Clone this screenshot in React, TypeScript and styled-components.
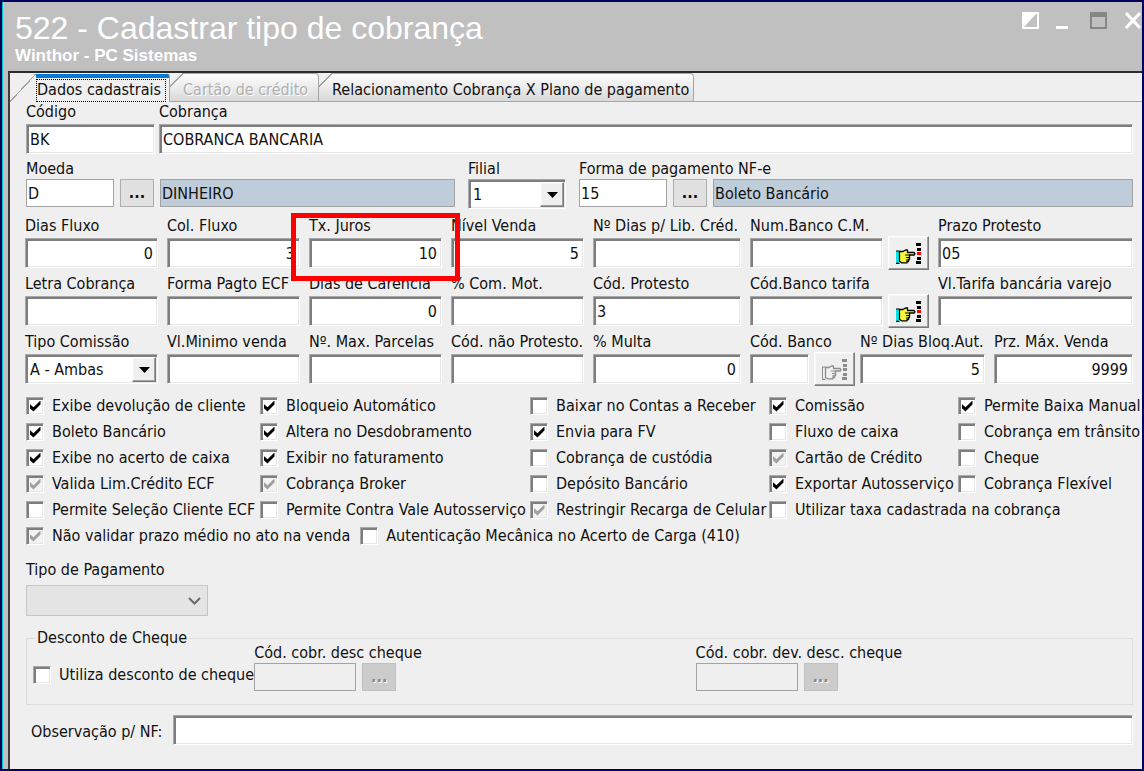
import React, { useId, useState } from "react";
import styled, { createGlobalStyle, css } from "styled-components";

const GlobalStyle = createGlobalStyle`
  *, *::before, *::after { box-sizing: border-box; }
  body {
    margin: 0;
    background: #00005c;
    color: #111;
    font: 16px/20px "DejaVu Sans Condensed", "DejaVu Sans", sans-serif;
  }
  button, input, select { font: inherit; color: inherit; margin: 0; border-radius: 0; }
`;

const sunken = css`
  border: 1px solid;
  border-color: #a8a8a8 #fff #fff #a8a8a8;
  box-shadow: inset 2px 2px 0 #7e7e7e, inset -1px -1px 0 #e6e6e6;
`;

const raised = css`
  border: 1px solid;
  border-color: #fff #7a7a7a #7a7a7a #fff;
  box-shadow: inset -1px -1px 0 #a0a0a0, inset 1px 1px 0 #f6f6f6;
  background: #efefef;
`;

/* ---------- window frame ---------- */

const Desktop = styled.div`
  min-height: 100vh;
  padding: 2px;
  display: flex;
  background: #00005c;
`;

const Window = styled.main`
  flex: 1;
  min-width: 0;
  display: flex;
  flex-direction: column;
  background: #c0c0c0;
  border-left: 1px solid #00c4cc;
`;

const TitleBar = styled.header`
  display: flex;
  justify-content: space-between;
  height: 69px;
  padding: 8px 0 0 12px;
  color: #fff;
  font-family: "Liberation Sans", Arial, sans-serif;
`;

const Title = styled.h1`
  margin: 0;
  font-size: 32px;
  line-height: 36px;
  font-weight: 400;
`;

const Subtitle = styled.p`
  margin: 0;
  font-size: 17px;
  line-height: 20px;
  font-weight: 700;
`;

const WindowButtons = styled.div`
  display: flex;
  gap: 17px;
  padding: 2px 1px 0 0;
  align-items: flex-start;
`;

const WindowButton = styled.button`
  width: 17px;
  height: 17px;
  padding: 0;
  border: 0;
  background: none;
  svg { display: block; }
`;

const Panel = styled.section`
  flex: 1;
  margin-left: 5px;
  border-left: 2px solid #3c3c3c;
  border-top: 2px solid #2c2c2c;
  background: #efefef;
`;

/* ---------- tabs ---------- */

const TabRow = styled.div`
  display: flex;
  height: 29px;
`;

const Tab = styled.button<{ $width: number }>`
  position: relative;
  flex: 0 0 auto;
  width: ${(p) => p.$width}px;
  padding: 4px 0 0 13px;
  border: 1px solid #a6a6a6;
  border-left: 0;
  border-top-right-radius: 4px;
  background: linear-gradient(#fdfdfd, #d9d9d9);
  text-align: left;
  white-space: nowrap;

  &::before {
    content: "";
    position: absolute;
    left: 0;
    top: -1px;
    width: 14px;
    height: 14px;
    background: linear-gradient(to bottom right, #efefef 46%, #a0a0a0 46% 53%, transparent 53%);
  }

  &:disabled {
    color: #b0b0b0;
    text-shadow: 1px 1px 0 #fff;
  }

  &[aria-selected="true"] {
    padding: 5px 3px 0 26px;
    border: 0;
    border-right: 1px solid #a6a6a6;
    background: linear-gradient(#0078d7, #0078d7) right 0 top 1px / calc(100% - 26px) 4px no-repeat;
  }
  &[aria-selected="true"]::before {
    top: 1px;
    width: 26px;
    height: 28px;
    background: linear-gradient(to bottom right, transparent 48%, #a0a0a0 48% 51%, transparent 51%);
  }
`;

const FocusText = styled.span`
  display: block;
  height: 23px;
  border: 1px dotted #000;
`;

const TabFill = styled.div`
  flex: 1;
  border-bottom: 1px solid #a6a6a6;
`;

/* ---------- form parts ---------- */

const Form = styled.form`
  padding: 0 9px 23px 16px;
`;

const FieldBlock = styled.div`
  margin: 7px 0 0 -1px;
  display: flex;
  flex-direction: column;
  gap: 6px;
`;

const Row = styled.div<{ $columns: number[]; $gap?: number; $top?: number }>`
  display: grid;
  grid-template-columns: ${(p) => p.$columns.map((c) => `minmax(0, ${c}fr)`).join(" ")};
  column-gap: ${(p) => p.$gap ?? 9}px;
  margin-top: ${(p) => p.$top ?? 0}px;
`;

const Field = styled.div<{ $tight?: boolean }>`
  position: relative;
  min-width: 0;
  display: flex;
  flex-direction: column;
  gap: ${(p) => (p.$tight ? 0 : 2)}px;
`;

const Label = styled.label`
  height: 20px;
  white-space: nowrap;
`;

const Controls = styled.div<{ $gap?: number }>`
  display: flex;
  align-items: center;
  gap: ${(p) => p.$gap ?? 6}px;
`;

const TextInput = styled.input<{ $numeric?: boolean }>`
  ${sunken}
  flex: 1 1 auto;
  width: 100%;
  min-width: 0;
  height: 30px;
  padding: 0 4px 0 3px;
  background: #fff;
  text-align: ${(p) => (p.$numeric ? "right" : "left")};
  outline: 0;
`;

const FlatInput = styled.input<{ $width?: number }>`
  flex: ${(p) => (p.$width ? `0 0 ${p.$width}px` : "1 1 0")};
  width: ${(p) => (p.$width ? `${p.$width}px` : "auto")};
  min-width: 0;
  height: 28px;
  padding: 0 2px 0 1px;
  border: 1px solid #a3a3a3;
  background: #fff;
  outline: 0;
  &:read-only { background: #bfccd9; }
  &:disabled { background: #efefef; }
`;

const DotsButton = styled.button`
  flex: 0 0 34px;
  height: 28px;
  padding: 0;
  border: 1px solid #adadad;
  background: #e1e1e1;
  font-weight: 700;
  &:disabled {
    border-color: #c0c0c0;
    background: #cccccc;
    color: #8a8a8a;
    text-shadow: 1px 1px 0 #fff;
  }
`;

const HandButton = styled.button`
  ${raised}
  flex: 0 0 41px;
  height: 34px;
  margin: -2px 0;
  padding: 0;
  display: flex;
  align-items: center;
  justify-content: center;
`;

const SelectBox = styled.div`
  position: relative;
  height: 30px;
`;

const ClassicSelect = styled.select`
  ${sunken}
  appearance: none;
  width: 100%;
  height: 30px;
  padding: 2px 28px 0 4px;
  background: #fff;
  outline: 0;
`;

const ArrowBox = styled.span`
  ${raised}
  position: absolute;
  right: 2px;
  top: 3px;
  width: 24px;
  height: 25px;
  display: grid;
  place-items: center;
  pointer-events: none;
`;

const DisabledSelect = styled.select`
  appearance: none;
  width: 182px;
  height: 31px;
  border: 1px solid #b4b4b4;
  background: #e0e0e0;
`;

const ChevronBox = styled.span`
  position: absolute;
  left: 162px;
  top: 12px;
  line-height: 0;
  pointer-events: none;
`;

const Highlight = styled.span`
  position: absolute;
  z-index: 2;
  top: -3px;
  bottom: -13px;
  left: -18px;
  right: -18px;
  border: 5px solid #fe0000;
  pointer-events: none;
`;

/* ---------- check boxes ---------- */

const CheckGrid = styled.div`
  display: grid;
  grid-template-columns: 234fr 270fr 239fr 189fr 175fr;
  grid-auto-rows: 26px;
  margin-top: 9px;
`;

const CheckLine = styled.div`
  display: flex;
  gap: 10px;
`;

const CheckLabel = styled.label<{ $height?: number }>`
  display: flex;
  align-items: center;
  gap: 8px;
  height: ${(p) => p.$height ?? 26}px;
  min-width: 0;
  white-space: nowrap;
`;

const CheckBox = styled.input`
  ${sunken}
  appearance: none;
  flex: 0 0 18px;
  width: 18px;
  height: 18px;
  background: #fff;
  display: grid;
  place-items: center;

  &:checked::after {
    content: "";
    width: 11px;
    height: 11px;
    background: #000;
    clip-path: polygon(0 30%, 36% 62%, 100% 0, 100% 36%, 36% 100%, 0 68%);
  }
  &:disabled { background: #f3f3f3; }
  &:disabled:checked::after { background: #a0a0a0; }
`;

/* ---------- lower groups ---------- */

const PaymentType = styled.div`
  position: relative;
  display: flex;
  flex-direction: column;
  gap: 5px;
  margin-top: 11px;
`;

const Group = styled.fieldset`
  margin: 18px 0 0;
  padding: 0 6px 13px;
  border: 1px solid #dcdcdc;
  min-width: 0;
`;

const Legend = styled.legend`
  height: 10px;
  margin-left: 2px;
  padding: 0 2px;
  line-height: 10px;
`;

const GroupRow = styled.div`
  display: grid;
  grid-template-columns: 221fr 441fr 430fr;
  align-items: end;
`;

const NoteRow = styled.div`
  display: flex;
  align-items: center;
  margin-top: 10px;
  padding-left: 5px;
`;

const NoteLabel = styled.label`
  flex: 0 0 142px;
  padding-top: 3px;
  white-space: nowrap;
`;

/* ---------- drawings ---------- */

function HandIcon({ muted = false }: { muted?: boolean }) {
  const ink = muted ? "#8c8c8c" : "#000";
  return (
    <svg width="26" height="21" viewBox="0 0 26 21" aria-hidden="true">
      {!muted && <rect x="0" y="8" width="3" height="12" fill="#00e5ee" />}
      <path
        d="M3.500 8.500H7L9.500 7H11.500V9.500H18L19 10.800L18 12H13.500V14.500H13.500V16.500H12.500V18.500H11V19.800H6L3.500 18.500Z"
        fill={muted ? "#efefef" : "#f8f840"}
        stroke={ink}
        strokeWidth="1.3"
        strokeLinejoin="round"
      />
      <path
        d="M9 12H13.500M10 14.500H13.500M10 17H12.500M0 8H3.500M0 20.300H3.500"
        stroke={ink}
        strokeWidth="1.2"
      />
      {muted && <path d="M0.500 8V20.500" stroke={ink} />}
      {[0, 5, 9, 14, 18].map((y) => (
        <rect
          key={y}
          x={y % 9 === 0 && y !== 9 ? 20 : 21}
          y={y}
          width={y % 9 === 0 && y !== 9 ? 5 : 4}
          height="3"
          fill={y === 9 && !muted ? "#ff0000" : ink}
        />
      ))}
    </svg>
  );
}

function DownArrow() {
  return (
    <svg width="11" height="6" viewBox="0 0 11 6" aria-hidden="true">
      <path d="M0 0H11L5.500 6Z" fill="#000" />
    </svg>
  );
}

/* ---------- composed controls ---------- */

type TextFieldProps = { label: string; value?: string; numeric?: boolean; highlight?: boolean };

function TextField({ label, value = "", numeric, highlight }: TextFieldProps) {
  const id = useId();
  return (
    <Field>
      <Label htmlFor={id}>{label}</Label>
      <TextInput id={id} defaultValue={value} $numeric={numeric} />
      {highlight && <Highlight />}
    </Field>
  );
}

function LookupField({ label, disabled }: { label: string; disabled?: boolean }) {
  const id = useId();
  return (
    <Field>
      <Label htmlFor={id}>{label}</Label>
      <Controls $gap={5}>
        <TextInput id={id} />
        <HandButton type="button" disabled={disabled} aria-label={`Pesquisar ${label}`}>
          <HandIcon muted={disabled} />
        </HandButton>
      </Controls>
    </Field>
  );
}

function CodeField({ label, code, name }: { label: string; code: string; name: string }) {
  const id = useId();
  return (
    <Field $tight>
      <Label htmlFor={id}>{label}</Label>
      <Controls>
        <FlatInput id={id} $width={88} defaultValue={code} />
        <DotsButton type="button" aria-label={`Pesquisar ${label}`}>...</DotsButton>
        <FlatInput readOnly value={name} aria-label={`${label}: descrição`} />
      </Controls>
    </Field>
  );
}

function DisabledCode({ label }: { label: string }) {
  const id = useId();
  return (
    <Field $tight>
      <Label htmlFor={id}>{label}</Label>
      <Controls>
        <FlatInput id={id} $width={102} disabled />
        <DotsButton type="button" disabled aria-label={`Pesquisar ${label}`}>...</DotsButton>
      </Controls>
    </Field>
  );
}

function SelectField({ label, option, tight }: { label: string; option: string; tight?: boolean }) {
  const id = useId();
  return (
    <Field $tight={tight}>
      <Label htmlFor={id}>{label}</Label>
      <SelectBox>
        <ClassicSelect id={id}>
          <option>{option}</option>
        </ClassicSelect>
        <ArrowBox>
          <DownArrow />
        </ArrowBox>
      </SelectBox>
    </Field>
  );
}

type CheckState = "on" | "off" | "locked";

type CheckProps = { label: string; state?: CheckState; height?: number };

function Check({ label, state = "off", height }: CheckProps) {
  const [checked, setChecked] = useState(state !== "off");
  return (
    <CheckLabel $height={height}>
      <CheckBox
        type="checkbox"
        checked={checked}
        disabled={state === "locked"}
        onChange={(e) => setChecked(e.target.checked)}
      />
      {label}
    </CheckLabel>
  );
}

const checks: [string, CheckState][] = [
  ["Exibe devolução de cliente", "on"],
  ["Bloqueio Automático", "on"],
  ["Baixar no Contas a Receber", "off"],
  ["Comissão", "on"],
  ["Permite Baixa Manual", "on"],
  ["Boleto Bancário", "on"],
  ["Altera no Desdobramento", "on"],
  ["Envia para FV", "on"],
  ["Fluxo de caixa", "off"],
  ["Cobrança em trânsito", "off"],
  ["Exibe no acerto de caixa", "on"],
  ["Exibir no faturamento", "on"],
  ["Cobrança de custódia", "off"],
  ["Cartão de Crédito", "locked"],
  ["Cheque", "off"],
  ["Valida Lim.Crédito ECF", "locked"],
  ["Cobrança Broker", "locked"],
  ["Depósito Bancário", "off"],
  ["Exportar Autosserviço", "on"],
  ["Cobrança Flexível", "off"],
  ["Permite Seleção Cliente ECF", "off"],
  ["Permite Contra Vale Autosserviço", "off"],
  ["Restringir Recarga de Celular", "locked"],
  ["Utilizar taxa cadastrada na cobrança", "off"],
];

export default function App() {
  return (
    <Desktop>
      <GlobalStyle />
      <Window>
        <TitleBar>
          <div>
            <Title>522 - Cadastrar tipo de cobrança</Title>
            <Subtitle>Winthor - PC Sistemas</Subtitle>
          </div>
          <WindowButtons>
            <WindowButton aria-label="Recolher">
              <svg width="17" height="17" viewBox="0 0 17 17">
                <path d="M1 1H16V16H1Z" fill="none" stroke="#fff" strokeWidth="2" />
                <path d="M1 1H15L2 15Z" fill="#fff" />
              </svg>
            </WindowButton>
            <WindowButton aria-label="Minimizar">
              <svg width="17" height="17" viewBox="0 0 17 17">
                <path d="M0 14H12V17H0Z" fill="#fff" />
              </svg>
            </WindowButton>
            <WindowButton aria-label="Maximizar">
              <svg width="17" height="17" viewBox="0 0 17 17">
                <path d="M1 1H16V16H1Z" fill="none" stroke="#868686" strokeWidth="2" />
                <path d="M0 0H17V5H0Z" fill="#868686" />
              </svg>
            </WindowButton>
            <WindowButton aria-label="Fechar">
              <svg width="17" height="17" viewBox="0 0 17 17">
                <path d="M2 1L16 16M16 1L2 16" stroke="#fff" strokeWidth="3" />
              </svg>
            </WindowButton>
          </WindowButtons>
        </TitleBar>

        <Panel>
          <TabRow role="tablist">
            <Tab role="tab" aria-selected="true" $width={160}>
              <FocusText>Dados cadastrais</FocusText>
            </Tab>
            <Tab role="tab" aria-selected="false" disabled $width={149}>
              Cartão de crédito
            </Tab>
            <Tab role="tab" aria-selected="false" $width={375}>
              Relacionamento Cobrança X Plano de pagamento
            </Tab>
            <TabFill />
          </TabRow>

          <Form>
            <Row $columns={[129, 974]} $gap={4}>
              <TextField label="Código" value="BK" />
              <TextField label="Cobrança" value="COBRANCA BANCARIA" />
            </Row>

            <Row $columns={[429, 98, 554]} $gap={13} $top={5}>
              <CodeField label="Moeda" code="D" name="DINHEIRO" />
              <SelectField label="Filial" option="1" tight />
              <CodeField label="Forma de pagamento NF-e" code="15" name="Boleto Bancário" />
            </Row>

            <FieldBlock>
              <Row $columns={[133, 133, 133, 133, 148, 179, 195]}>
                <TextField label="Dias Fluxo" value="0" numeric />
                <TextField label="Col. Fluxo" value="3" numeric />
                <TextField label="Tx. Juros" value="10" numeric highlight />
                <TextField label="Nível Venda" value="5" numeric />
                <TextField label="Nº Dias p/ Lib. Créd." />
                <LookupField label="Num.Banco C.M." />
                <TextField label="Prazo Protesto" value="05" />
              </Row>

              <Row $columns={[133, 133, 133, 133, 148, 179, 195]}>
                <TextField label="Letra Cobrança" />
                <TextField label="Forma Pagto ECF" />
                <TextField label="Dias de Carência" value="0" numeric />
                <TextField label="% Com. Mot." />
                <TextField label="Cód. Protesto" value="3" />
                <LookupField label="Cód.Banco tarifa" />
                <TextField label="Vl.Tarifa bancária varejo" />
              </Row>

              <Row $columns={[133, 133, 133, 133, 148, 235, 139]}>
                <SelectField label="Tipo Comissão" option="A - Ambas" />
                <TextField label="Vl.Minimo venda" />
                <TextField label="Nº. Max. Parcelas" />
                <TextField label="Cód. não Protesto." />
                <TextField label="% Multa" value="0" numeric />
                <Row $columns={[105, 125]} $gap={5}>
                  <LookupField label="Cód. Banco" disabled />
                  <TextField label="Nº Dias Bloq.Aut." value="5" numeric />
                </Row>
                <TextField label="Prz. Máx. Venda" value="9999" numeric />
              </Row>
            </FieldBlock>

            <CheckGrid>
              {checks.map(([label, state]) => (
                <Check key={label} label={label} state={state} />
              ))}
            </CheckGrid>
            <CheckLine>
              <Check label="Não validar prazo médio no ato na venda" state="locked" />
              <Check label="Autenticação Mecânica no Acerto de Carga (410)" />
            </CheckLine>

            <PaymentType>
              <Label htmlFor="tipo-pagamento">Tipo de Pagamento</Label>
              <SelectBox>
                <DisabledSelect id="tipo-pagamento" disabled />
                <ChevronBox>
                  <svg width="13" height="8" viewBox="0 0 13 8" aria-hidden="true">
                    <path d="M1 1L6.500 6.500L12 1" fill="none" stroke="#6b6b6b" strokeWidth="2" />
                  </svg>
                </ChevronBox>
              </SelectBox>
            </PaymentType>

            <Group>
              <Legend>Desconto de Cheque</Legend>
              <GroupRow>
                <Check label="Utiliza desconto de cheque" height={32} />
                <DisabledCode label="Cód. cobr. desc cheque" />
                <DisabledCode label="Cód. cobr. dev. desc. cheque" />
              </GroupRow>
            </Group>

            <NoteRow>
              <NoteLabel htmlFor="observacao">Observação p/ NF:</NoteLabel>
              <TextInput id="observacao" />
            </NoteRow>
          </Form>
        </Panel>
      </Window>
    </Desktop>
  );
}
